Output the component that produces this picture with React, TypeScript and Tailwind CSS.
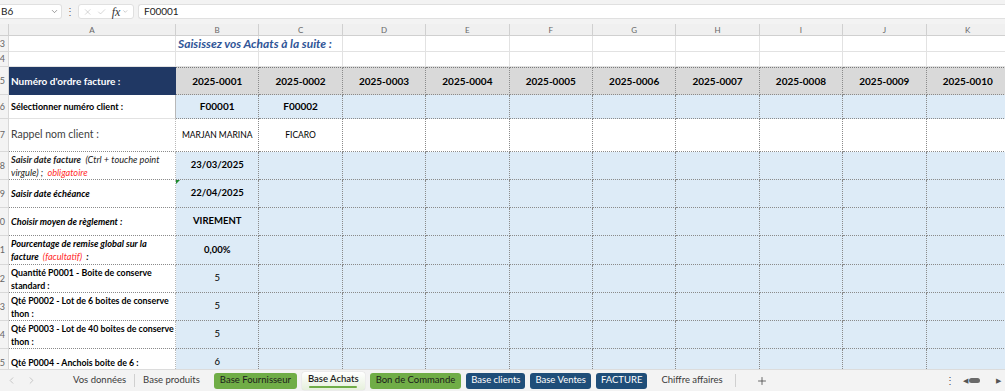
import { ChevronDown, X, Check, Plus, ChevronLeft, ChevronRight } from "lucide-react"

type Row = {
  num: string
  h: string
  kind: "plain" | "head" | "blue" | "white"
  label?: React.ReactNode
  b?: string
  c?: string
  valueClass?: string
}

const cols = ["B", "C", "D", "E", "F", "G", "H", "I", "J", "K"]
const heads = cols.map((_, i) => `2025-${String(i + 1).padStart(4, "0")}`)

const rows: Row[] = [
  { num: "3", h: "h-[16px]", kind: "plain" },
  { num: "4", h: "h-[15px]", kind: "plain" },
  {
    num: "5",
    h: "h-[28px]",
    kind: "head",
    label: <span className="text-[10px] font-bold text-white">Numéro d'ordre facture :</span>,
  },
  {
    num: "6",
    h: "h-[24px]",
    kind: "blue",
    label: <span className="text-[9px] font-bold text-black">Sélectionner numéro client :</span>,
    b: "F00001",
    c: "F00002",
    valueClass: "font-bold text-[10px]",
  },
  {
    num: "7",
    h: "h-[33px]",
    kind: "white",
    label: <span className="text-[10.5px] text-[#404040]">Rappel nom client :</span>,
    b: "MARJAN MARINA",
    c: "FICARO",
    valueClass: "text-[8.5px] text-[#333]",
  },
  {
    num: "8",
    h: "h-[28px]",
    kind: "blue",
    label: (
      <span className="text-[9.2px] italic leading-[13px] text-[#222]">
        <b>Saisir date facture</b> &nbsp;(Ctrl + touche point virgule) ; &nbsp;
        <span className="text-[#ff2b2b]">obligatoire</span>
      </span>
    ),
    b: "23/03/2025",
    valueClass: "font-bold text-[9.5px]",
  },
  {
    num: "9",
    h: "h-[28px]",
    kind: "blue",
    label: <span className="text-[9.2px] italic font-bold">Saisir date échéance</span>,
    b: "22/04/2025",
    valueClass: "font-bold text-[9.5px]",
  },
  {
    num: "10",
    h: "h-[28px]",
    kind: "blue",
    label: <span className="text-[9.2px] italic font-bold">Choisir moyen de règlement :</span>,
    b: "VIREMENT",
    valueClass: "font-bold text-[9.5px]",
  },
  {
    num: "11",
    h: "h-[29px]",
    kind: "blue",
    label: (
      <span className="text-[9.2px] italic font-bold leading-[13px]">
        Pourcentage de remise global sur la facture &nbsp;
        <span className="font-normal text-[#ff2b2b]">(facultatif)</span> &nbsp;:
      </span>
    ),
    b: "0,00%",
    valueClass: "font-bold text-[9.5px]",
  },
  {
    num: "12",
    h: "h-[28px]",
    kind: "blue",
    label: <span className="text-[8.8px] font-bold leading-[13px]">Quantité P0001 - Boite de conserve standard :</span>,
    b: "5",
    valueClass: "text-[9.5px] text-[#333]",
  },
  {
    num: "13",
    h: "h-[28px]",
    kind: "blue",
    label: <span className="text-[8.8px] font-bold leading-[13px]">Qté P0002 - Lot de 6 boites de conserve thon :</span>,
    b: "5",
    valueClass: "text-[9.5px] text-[#333]",
  },
  {
    num: "14",
    h: "h-[28px]",
    kind: "blue",
    label: <span className="text-[8.8px] font-bold leading-[13px]">Qté P0003 - Lot de 40 boites de conserve thon :</span>,
    b: "5",
    valueClass: "text-[9.5px] text-[#333]",
  },
  {
    num: "15",
    h: "h-[28px]",
    kind: "blue",
    label: <span className="text-[8.8px] font-bold">Qté P0004 - Anchois boite de 6 :</span>,
    b: "6",
    valueClass: "text-[9.5px] text-[#333]",
  },
]

const FormulaBar = () => (
  <div className="flex h-[24px] items-start gap-[4px] bg-[#f3f3f3] pt-[4px] text-[10px] text-[#222]">
    <div className="flex h-[15px] w-[62px] items-center justify-between rounded-r-[3px] border border-l-0 border-[#e0e0e0] bg-white pl-[1px] pr-[2px]">
      <span>B6</span>
      <ChevronDown className="h-[9px] w-[9px] text-[#555]" strokeWidth={1.5} />
    </div>
    <div className="flex h-[15px] w-[8px] items-center justify-center text-[10px] text-[#666]">⋮</div>
    <div className="flex h-[15px] w-[56px] items-center gap-[5px] rounded-[3px] border border-[#e0e0e0] bg-white px-[4px] text-[#aaa]">
      <X className="h-[10px] w-[10px]" strokeWidth={1.2} />
      <Check className="h-[10px] w-[10px]" strokeWidth={1.2} />
      <span className="font-['Liberation_Serif',serif] text-[12px] italic leading-none text-[#333]">fx</span>
      <ChevronDown className="-ml-[3px] h-[7px] w-[7px] text-[#888]" strokeWidth={1.5} />
    </div>
    <div className="flex h-[15px] flex-1 items-center rounded-l-[3px] border border-r-0 border-[#e0e0e0] bg-white pl-[5px]">
      F00001
    </div>
  </div>
)

const RowNum = ({ n, h }: { n: string; h: string }) => (
  <div className={`${h} flex items-center justify-end overflow-hidden border-b border-r border-[#d8d8d8] bg-[#f3f3f3] pr-[3px]`}>
    <span className="shrink-0 whitespace-nowrap text-[9px] text-[#666]">{n}</span>
  </div>
)

const Tab = ({ label, variant }: { label: string; variant: "plain" | "green" | "blue" | "active" }) => {
  if (variant === "green")
    return (
      <div className="flex h-[16px] items-center rounded-[3px] bg-[#70ad47] px-[6px] text-[#1b1b1b]">{label}</div>
    )
  if (variant === "blue")
    return <div className="flex h-[16px] items-center rounded-[3px] bg-[#1f4e79] px-[5px] text-white">{label}</div>
  if (variant === "active")
    return (
      <div className="flex h-[18px] flex-col items-center justify-center rounded-[3px] bg-gradient-to-b from-white to-[#e6f0dc] px-[6px] font-semibold text-[#1b1b1b] shadow-[0_0_1px_rgba(0,0,0,0.3)]">
        <span className="leading-[12px]">{label}</span>
        <span className="mt-[1px] h-[2px] w-[48px] rounded bg-[#70ad47]" />
      </div>
    )
  return <div className="px-[3px] text-[#3a3a3a]">{label}</div>
}

const App = () => {
  return (
    <div className="h-[391px] w-[1005px] overflow-hidden bg-white font-['Lato',sans-serif]">
      <FormulaBar />

      <div className="h-[345px] overflow-hidden">
        <div className="grid grid-cols-[9px_167px_repeat(10,83.4px)]">
          {/* column letters */}
          <div className="h-[12px] border-b border-r border-[#d0d0d0] bg-[#f0f0f0]" />
          <div className="flex h-[12px] items-center justify-center border-b border-r border-[#d0d0d0] bg-[#f0f0f0] text-[8px] text-[#666]">
            A
          </div>
          {cols.map((c) => (
            <div
              key={c}
              className="flex h-[12px] items-center justify-center border-b border-r border-[#d0d0d0] bg-[#f0f0f0] text-[8px] text-[#666]"
            >
              {c}
            </div>
          ))}

          {rows.map((r) => {
            const aClass =
              r.kind === "plain"
                ? "border-b border-r border-[#e2e2e2] bg-white"
                : r.kind === "head"
                  ? "bg-[#203864] border-r border-[#203864]"
                  : r.num === "6"
                    ? "border-b border-r border-b-[#e2e2e2] border-r-[#b8b8b8] bg-white"
                    : "border-b border-r border-dotted border-b-[#8a8a8a] border-r-[#b8b8b8] bg-white"
            return (
              <div key={r.num} className="contents">
                <RowNum n={r.num} h={r.h} />
                <div className={`${r.h} ${aClass} flex items-center overflow-hidden pl-[2px] pr-[1px]`}>
                  {r.label}
                </div>
                {cols.map((c, i) => {
                  let cellClass = ""
                  let content: React.ReactNode = null
                  if (r.kind === "plain") {
                    cellClass = "border-b border-r border-[#e2e2e2] bg-white"
                    if (r.num === "3" && i === 0)
                      content = (
                        <span className="relative z-10 whitespace-nowrap pl-[2px] text-[12px] font-bold italic text-[#2f5597]">
                          Saisissez vos Achats à la suite :
                        </span>
                      )
                  } else if (r.kind === "head") {
                    cellClass =
                      "border-t border-t-[#7a7a7a] border-b border-r border-dotted border-b-[#8a8a8a] border-r-[#8a8a8a] bg-[#d9d9d9] justify-center"
                    content = <span className="text-[10px] font-bold text-black">{heads[i]}</span>
                  } else {
                    cellClass = `border-b border-r border-dotted border-[#8a8a8a] justify-center ${
                      r.kind === "blue" ? "bg-[#ddebf7]" : "bg-white"
                    }`
                    const v = i === 0 ? r.b : i === 1 ? r.c : undefined
                    if (v) content = <span className={`${r.valueClass} text-black`}>{v}</span>
                  }
                  return (
                    <div
                      key={c}
                      className={`${r.h} ${cellClass} relative flex items-center ${
                        r.kind === "plain" && r.num === "3" ? "overflow-visible" : "overflow-hidden"
                      }`}
                    >
                      {r.num === "9" && i === 0 && (
                        <span className="absolute left-0 top-0 h-0 w-0 border-r-[4px] border-t-[4px] border-r-transparent border-t-[#1e8a2e]" />
                      )}
                      {content}
                    </div>
                  )
                })}
              </div>
            )
          })}
        </div>
      </div>

      {/* sheet tabs */}
      <div className="flex h-[22px] items-center border-t border-[#dcdcdc] bg-[#f3f3f3] text-[9.5px]">
        <div className="flex w-[70px] items-center gap-[9px] pl-[6px] text-[#b0b0b0]">
          <ChevronLeft className="h-[11px] w-[11px]" strokeWidth={1.5} />
          <ChevronRight className="h-[11px] w-[11px]" strokeWidth={1.5} />
        </div>
        <div className="flex items-center gap-[5px]">
          <Tab label="Vos données" variant="plain" />
          <span className="h-[13px] w-px bg-[#d0d0d0]" />
          <div className="pr-[6px]">
            <Tab label="Base produits" variant="plain" />
          </div>
          <Tab label="Base Fournisseur" variant="green" />
          <Tab label="Base Achats" variant="active" />
          <Tab label="Bon de Commande" variant="green" />
          <Tab label="Base clients" variant="blue" />
          <Tab label="Base Ventes" variant="blue" />
          <Tab label="FACTURE" variant="blue" />
          <div className="pl-[6px] pr-[4px]">
            <Tab label="Chiffre affaires" variant="plain" />
          </div>
          <span className="h-[13px] w-px bg-[#d0d0d0]" />
        </div>
        <Plus className="ml-[20px] h-[12px] w-[12px] text-[#444]" strokeWidth={1.6} />
        <div className="ml-auto flex items-center gap-[8px] pr-[4px] text-[#555]">
          <span className="text-[10px]">⋮</span>
          <div className="flex items-center gap-[1px]">
            <span className="text-[7px]">◀</span>
            <span className="h-[5px] w-[11px] rounded-full bg-[#6a6a6a]" />
          </div>
          <span className="ml-[8px] text-[7px]">▶</span>
        </div>
      </div>
    </div>
  )
}

export default App
